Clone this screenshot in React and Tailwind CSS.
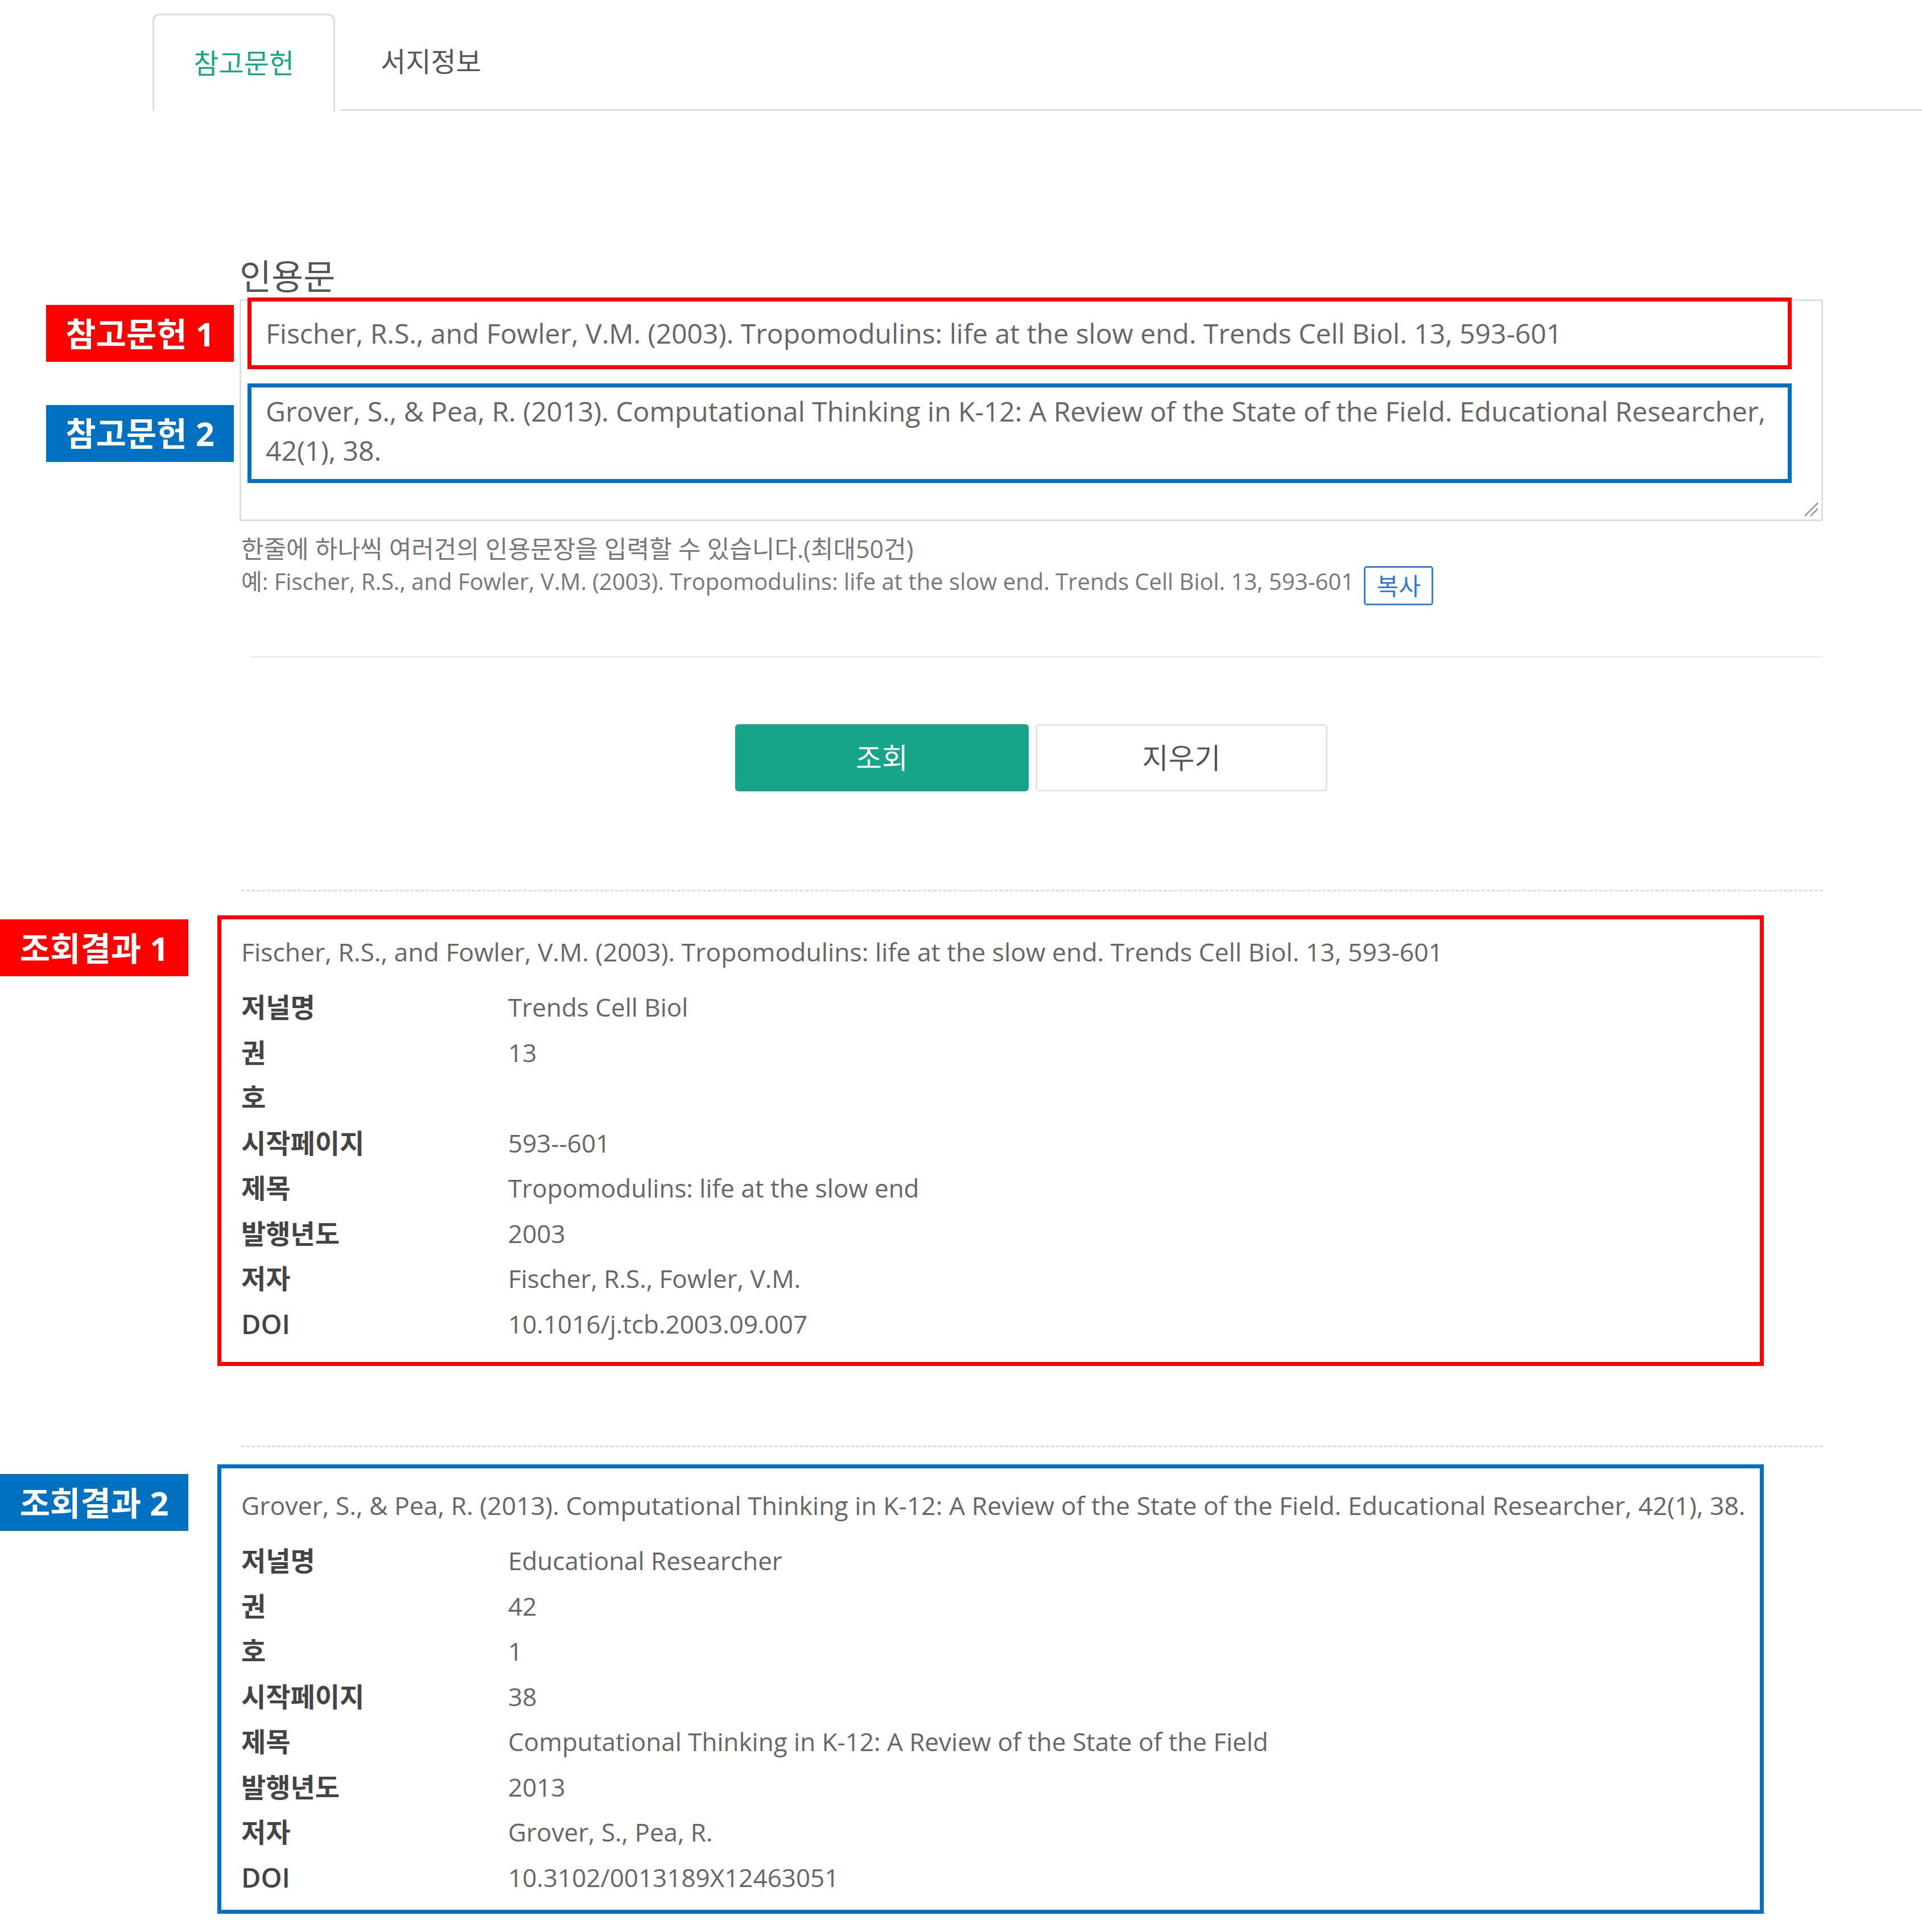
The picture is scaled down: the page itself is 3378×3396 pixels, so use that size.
import React from "react";

const results = [
  {
    label: "조회결과 1",
    box: "border-[#ff0000] pt-[25px] pb-[27px]",
    tag: "bg-[#ff0000] top-0",
    spaceTop: "mt-[42px]",
    citation:
      "Fischer, R.S., and Fowler, V.M. (2003). Tropomodulins: life at the slow end. Trends Cell Biol. 13, 593-601",
    rows: [
      ["저널명", "Trends Cell Biol"],
      ["권", "13"],
      ["호", ""],
      ["시작페이지", "593--601"],
      ["제목", "Tropomodulins: life at the slow end"],
      ["발행년도", "2003"],
      ["저자", "Fischer, R.S., Fowler, V.M."],
      ["DOI", "10.1016/j.tcb.2003.09.007"],
    ],
  },
  {
    label: "조회결과 2",
    box: "border-[#0070c0] pt-[33px] pb-[17px]",
    tag: "bg-[#0070c0] top-[10px]",
    spaceTop: "mt-[30px]",
    citation:
      "Grover, S., & Pea, R. (2013). Computational Thinking in K-12: A Review of the State of the Field. Educational Researcher, 42(1), 38.",
    rows: [
      ["저널명", "Educational Researcher"],
      ["권", "42"],
      ["호", "1"],
      ["시작페이지", "38"],
      ["제목", "Computational Thinking in K-12: A Review of the State of the Field"],
      ["발행년도", "2013"],
      ["저자", "Grover, S., Pea, R."],
      ["DOI", "10.3102/0013189X12463051"],
    ],
  },
];

const ResultBox = ({ item }) => {
  return (
    <div className={`relative -ml-[39px] w-[2718px] border-[7px] pl-[35px] ${item.box} ${item.spaceTop}`}>
      <div
        className={`absolute right-full mr-[58px] w-[331px] h-[100px] flex items-center justify-center text-white font-bold text-[58px] ${item.tag}`}
      >
        {item.label}
      </div>
      <p className="whitespace-nowrap text-[44.5px] leading-[64px] text-[#666]">{item.citation}</p>
      <dl className="mt-[26px] grid grid-cols-[469px_1fr] items-center">
        {item.rows.map(([k, v]) => (
          <React.Fragment key={k}>
            <dt className="text-[47px] leading-[79.5px] font-semibold text-[#444]">{k}</dt>
            <dd className="text-[44px] leading-[79.5px] text-[#666] whitespace-nowrap">{v}</dd>
          </React.Fragment>
        ))}
      </dl>
    </div>
  );
};

const App = () => {
  return (
    <div className="min-h-screen bg-white font-['Open_Sans','Noto_Sans_CJK_KR',sans-serif] text-[#666]">
      {/* tabs */}
      <div className="flex pt-[24px] pl-[268px]">
        <div className="w-[321px] h-[171px] border-[3px] border-b-0 border-[#dddddd] rounded-t-[12px] flex items-center justify-center text-[48px] text-[#1aa58a]">
          참고문헌
        </div>
        <div className="flex-1 ml-[8px] border-b-[3px] border-[#dddddd] flex items-center pl-[72px] text-[48px] text-[#555]">
          서지정보
        </div>
      </div>

      <div className="ml-[421px] w-[2783px] pt-[250px] pb-[25px]">
        <h2 className="text-[61px] leading-[81px] text-[#555]">인용문</h2>

        {/* textarea */}
        <div className="relative h-[390px] border-[3px] border-[#dddddd] rounded-[2px]">
          <div className="relative -mt-[6px] ml-[11px] w-[2714px] h-[126px] border-[7px] border-[#ff0000] flex items-center pl-[25px] text-[48px] text-[#666] whitespace-nowrap">
            <div className="absolute right-full mr-[31px] top-1/2 -translate-y-1/2 w-[330px] h-[100px] bg-[#ff0000] flex items-center justify-center text-white font-bold text-[58px]">
              참고문헌 1
            </div>
            Fischer, R.S., and Fowler, V.M. (2003). Tropomodulins: life at the slow end. Trends Cell Biol. 13, 593-601
          </div>
          <div className="relative mt-[25px] ml-[11px] w-[2714px] h-[175px] border-[7px] border-[#0070c0] pl-[25px] pt-[7px] text-[48px] leading-[69px] text-[#666] whitespace-nowrap">
            <div className="absolute right-full mr-[31px] top-1/2 -translate-y-1/2 w-[330px] h-[100px] bg-[#0070c0] flex items-center justify-center text-white font-bold text-[58px]">
              참고문헌 2
            </div>
            Grover, S., &amp; Pea, R. (2013). Computational Thinking in K-12: A Review of the State of the Field. Educational Researcher,
            <br />
            42(1), 38.
          </div>
          <svg className="absolute right-[4px] bottom-[4px] w-[28px] h-[28px]" viewBox="0 0 28 28">
            <path d="M26 3 L3 26 M26 13 L13 26" stroke="#999" strokeWidth="2.5" fill="none" />
          </svg>
        </div>

        {/* helper */}
        <div className="mt-[20px] pl-[3px] text-[40px] leading-[57px] text-[#777]">
          <p className="text-[43px]">한줄에 하나씩 여러건의 인용문장을 입력할 수 있습니다.(최대50건)</p>
          <div className="flex items-start gap-[17px]">
            <p className="whitespace-nowrap">
              예: Fischer, R.S., and Fowler, V.M. (2003). Tropomodulins: life at the slow end. Trends Cell Biol. 13, 593-601
            </p>
            <button className="mt-[2px] w-[122px] h-[69px] border-[3px] border-[#3a80d6] rounded-[5px] text-[42px] leading-none text-[#2f78d2] bg-white">
              복사
            </button>
          </div>
        </div>

        <div className="mt-[89px] ml-[18px] border-t-[3px] border-[#eeeeee]" />

        {/* buttons */}
        <div className="mt-[117px] flex justify-center gap-[12px]">
          <button className="w-[516px] h-[118px] rounded-[6px] bg-[#17a589] text-white text-[50px]">조회</button>
          <button className="w-[513px] h-[118px] rounded-[6px] border-[3px] border-[#e3e3e3] bg-white text-[#555] text-[50px]">
            지우기
          </button>
        </div>

        <div className="mt-[173px] ml-[3px] border-t-[3px] border-dashed border-[#dddddd]" />
        <ResultBox item={results[0]} />

        <div className="mt-[140px] ml-[3px] border-t-[3px] border-dashed border-[#dddddd]" />
        <ResultBox item={results[1]} />
      </div>
    </div>
  );
};

export default App;
